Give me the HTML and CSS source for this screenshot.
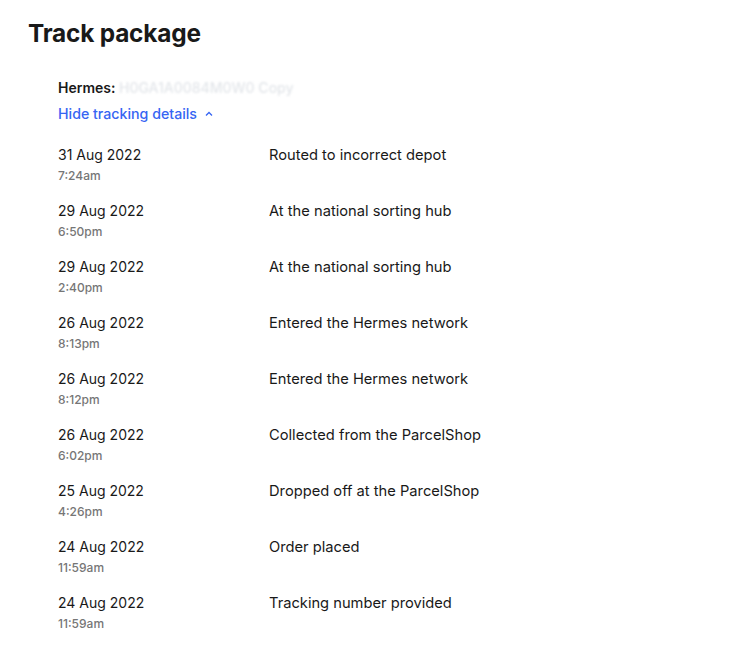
FILE: index.html
```html
<!DOCTYPE html>
<html>
<head>
    <meta charset="UTF-8">
    <title>Track package</title>
    <link rel="stylesheet" href="styles.css">
</head>
<body>
    <div class="page">
        <h1>Track package</h1>
        <div class="tracking">
            <p class="carrier">Hermes: <span class="number">H0GA1A0084M0W0 Copy</span></p>
            <a class="toggle" href="#">Hide tracking details
                <svg width="10" height="10" viewBox="0 0 10 10"><path d="M2 6.5 L5 3.5 L8 6.5" fill="none" stroke="#3665f3" stroke-width="1.3"/></svg>
            </a>
            <ul class="events">
                <li><div class="when"><span class="date">31 Aug 2022</span><span class="time">7:24am</span></div><div class="what">Routed to incorrect depot</div></li>
                <li><div class="when"><span class="date">29 Aug 2022</span><span class="time">6:50pm</span></div><div class="what">At the national sorting hub</div></li>
                <li><div class="when"><span class="date">29 Aug 2022</span><span class="time">2:40pm</span></div><div class="what">At the national sorting hub</div></li>
                <li><div class="when"><span class="date">26 Aug 2022</span><span class="time">8:13pm</span></div><div class="what">Entered the Hermes network</div></li>
                <li><div class="when"><span class="date">26 Aug 2022</span><span class="time">8:12pm</span></div><div class="what">Entered the Hermes network</div></li>
                <li><div class="when"><span class="date">26 Aug 2022</span><span class="time">6:02pm</span></div><div class="what">Collected from the ParcelShop</div></li>
                <li><div class="when"><span class="date">25 Aug 2022</span><span class="time">4:26pm</span></div><div class="what">Dropped off at the ParcelShop</div></li>
                <li><div class="when"><span class="date">24 Aug 2022</span><span class="time">11:59am</span></div><div class="what">Order placed</div></li>
                <li><div class="when"><span class="date">24 Aug 2022</span><span class="time">11:59am</span></div><div class="what">Tracking number provided</div></li>
            </ul>
        </div>
    </div>
</body>
</html>
```

FILE: styles.css
```css
body {
    margin: 0;
    background: #fff;
    font-family: Inter, "Liberation Sans", sans-serif;
    color: #191919;
}

.page {
    padding: 17px 28px;
}

h1 {
    margin: 0;
    font-size: 24.4px;
    font-weight: 700;
    line-height: 32px;
    color: #191919;
    letter-spacing: -0.2px;
}

.tracking {
    padding-left: 30px;
    margin-top: 28px;
}

.carrier {
    margin: 0;
    font-size: 14px;
    font-weight: 600;
    line-height: 22px;
}

.number {
    color: #e3e6ea;
    font-weight: 500;
    filter: blur(1px);
}

.toggle {
    display: inline-flex;
    align-items: center;
    gap: 7px;
    margin-top: 4px;
    font-size: 14.2px;
    font-weight: 500;
    line-height: 22px;
    color: #3665f3;
    text-decoration: none;
}

.events {
    list-style: none;
    margin: 19px 0 0;
    padding: 0;
}

.events li {
    display: flex;
    height: 56px;
}

.when {
    display: flex;
    flex-direction: column;
    width: 211px;
}

.date {
    font-size: 14px;
    line-height: 22px;
}

.time {
    font-size: 12px;
    line-height: 20px;
    font-weight: 500;
    color: #767676;
}

.what {
    font-size: 14.7px;
    line-height: 22px;
}
```
